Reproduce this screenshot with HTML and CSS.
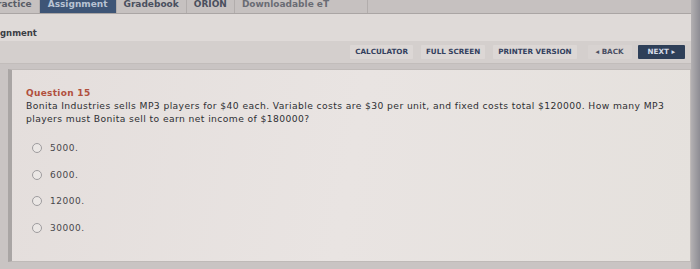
FILE: index.html
```html
<!DOCTYPE html>
<html>
<head>
<meta charset="utf-8">
<link rel="stylesheet" href="styles.css">
</head>
<body>
<div class="page">
  <div class="main">
    <div class="tabs">
      <div class="tab first">ractice</div>
      <div class="tab active">Assignment</div>
      <div class="tab">Gradebook</div>
      <div class="tab">ORION</div>
      <div class="tab faded">Downloadable eT</div>
    </div>
    <div class="header">gnment</div>
    <div class="toolbar">
      <span class="btn">CALCULATOR</span>
      <span class="btn">FULL SCREEN</span>
      <span class="btn">PRINTER VERSION</span>
      <span class="btn back">&#9666; BACK</span>
      <span class="btn next">NEXT &#9656;</span>
    </div>
    <div class="area">
      <div class="card">
        <div class="qtitle">Question 15</div>
        <p class="qtext">Bonita Industries sells MP3 players for $40 each. Variable costs are $30 per unit, and fixed costs total $120000. How many MP3 players must Bonita sell to earn net income of $180000?</p>
        <ul class="options">
          <li><span class="radio"></span>5000.</li>
          <li><span class="radio"></span>6000.</li>
          <li><span class="radio"></span>12000.</li>
          <li><span class="radio"></span>30000.</li>
        </ul>
      </div>
    </div>
  </div>
  <div class="bezel"></div>
</div>
</body>
</html>
```
FILE: styles.css
```css
html, body {
  margin: 0;
  padding: 0;
}
body {
  width: 700px;
  height: 269px;
  overflow: hidden;
  background: #c9c4c3;
  font-family: "DejaVu Sans", Verdana, sans-serif;
}
.page {
  display: flex;
  height: 269px;
}
.main {
  flex: 1;
  display: flex;
  flex-direction: column;
}
.bezel {
  width: 9px;
  background: linear-gradient(90deg, #b3b0b2, #8d8c93);
}
.tabs {
  height: 13px;
  overflow: hidden;
  display: flex;
  align-items: flex-end;
  background: #c6c1c0;
  border-bottom: 1px solid #aaa5a4;
  font-size: 9px;
  font-weight: bold;
  color: #4a4f5e;
}
.tab {
  height: 18px;
  line-height: 18px;
  padding: 0 7px;
  border-right: 1px solid #b2adac;
  white-space: nowrap;
}
.tab.first {
  padding: 0 7px 0 0;
  margin-left: -3px;
  color: #5a5d66;
}
.tab.active {
  background: #3e5576;
  color: #b8c3d3;
  padding: 0 8px;
}
.tab.faded {
  color: #6a6c74;
  padding-right: 38px;
}
.header {
  height: 27px;
  background: #dfdad8;
  font-size: 8.5px;
  font-weight: bold;
  color: #3a3d44;
  line-height: 14px;
  padding-top: 12px;
  box-sizing: border-box;
}
.toolbar {
  height: 23px;
  background: #d4cfcd;
  display: flex;
  align-items: center;
  justify-content: flex-end;
  gap: 8px;
  padding-right: 6px;
  border-bottom: 1px solid #c2bdbb;
  box-sizing: border-box;
}
.btn {
  height: 14px;
  line-height: 14px;
  padding: 0 5px;
  background: #dcd7d5;
  color: #33405e;
  font-size: 7.2px;
  font-weight: bold;
  white-space: nowrap;
  border-radius: 1px;
}
.btn.back {
  background: #d8d3d1;
  margin-left: 3px;
  margin-right: -2px;
  padding: 0 8px;
  color: #4a4f63;
}
.btn.next {
  background: #2e3f58;
  color: #d5dbe6;
  padding: 0 10px;
}
.area {
  flex: 1;
  padding: 5px 0 7px 8px;
  display: flex;
}
.card {
  flex: 1;
  background: linear-gradient(100deg, #e4dedc 0%, #e9e4e2 50%, #e5e1dd 100%);
  border: 1px solid #bfbab8;
  border-left: 4px solid #a9a5a4;
  box-sizing: border-box;
  padding: 17px 12px 0 14px;
}
.qtitle {
  color: #b1503d;
  font-size: 9px;
  font-weight: bold;
  line-height: 12px;
  letter-spacing: 0.3px;
}
.qtext {
  margin: 1px 0 0 0;
  font-size: 9.2px;
  line-height: 12.5px;
  letter-spacing: 0.4px;
  color: #2e2f33;
}
.options {
  list-style: none;
  margin: 10px 0 0 0;
  padding: 0 0 0 6px;
}
.options li {
  display: flex;
  align-items: center;
  gap: 8px;
  height: 26.5px;
  font-size: 9px;
  letter-spacing: 0.5px;
  color: #48484c;
}
.radio {
  width: 8px;
  height: 8px;
  border: 1px solid #9e9c9e;
  border-radius: 50%;
  background: #ebe7e5;
}
```
